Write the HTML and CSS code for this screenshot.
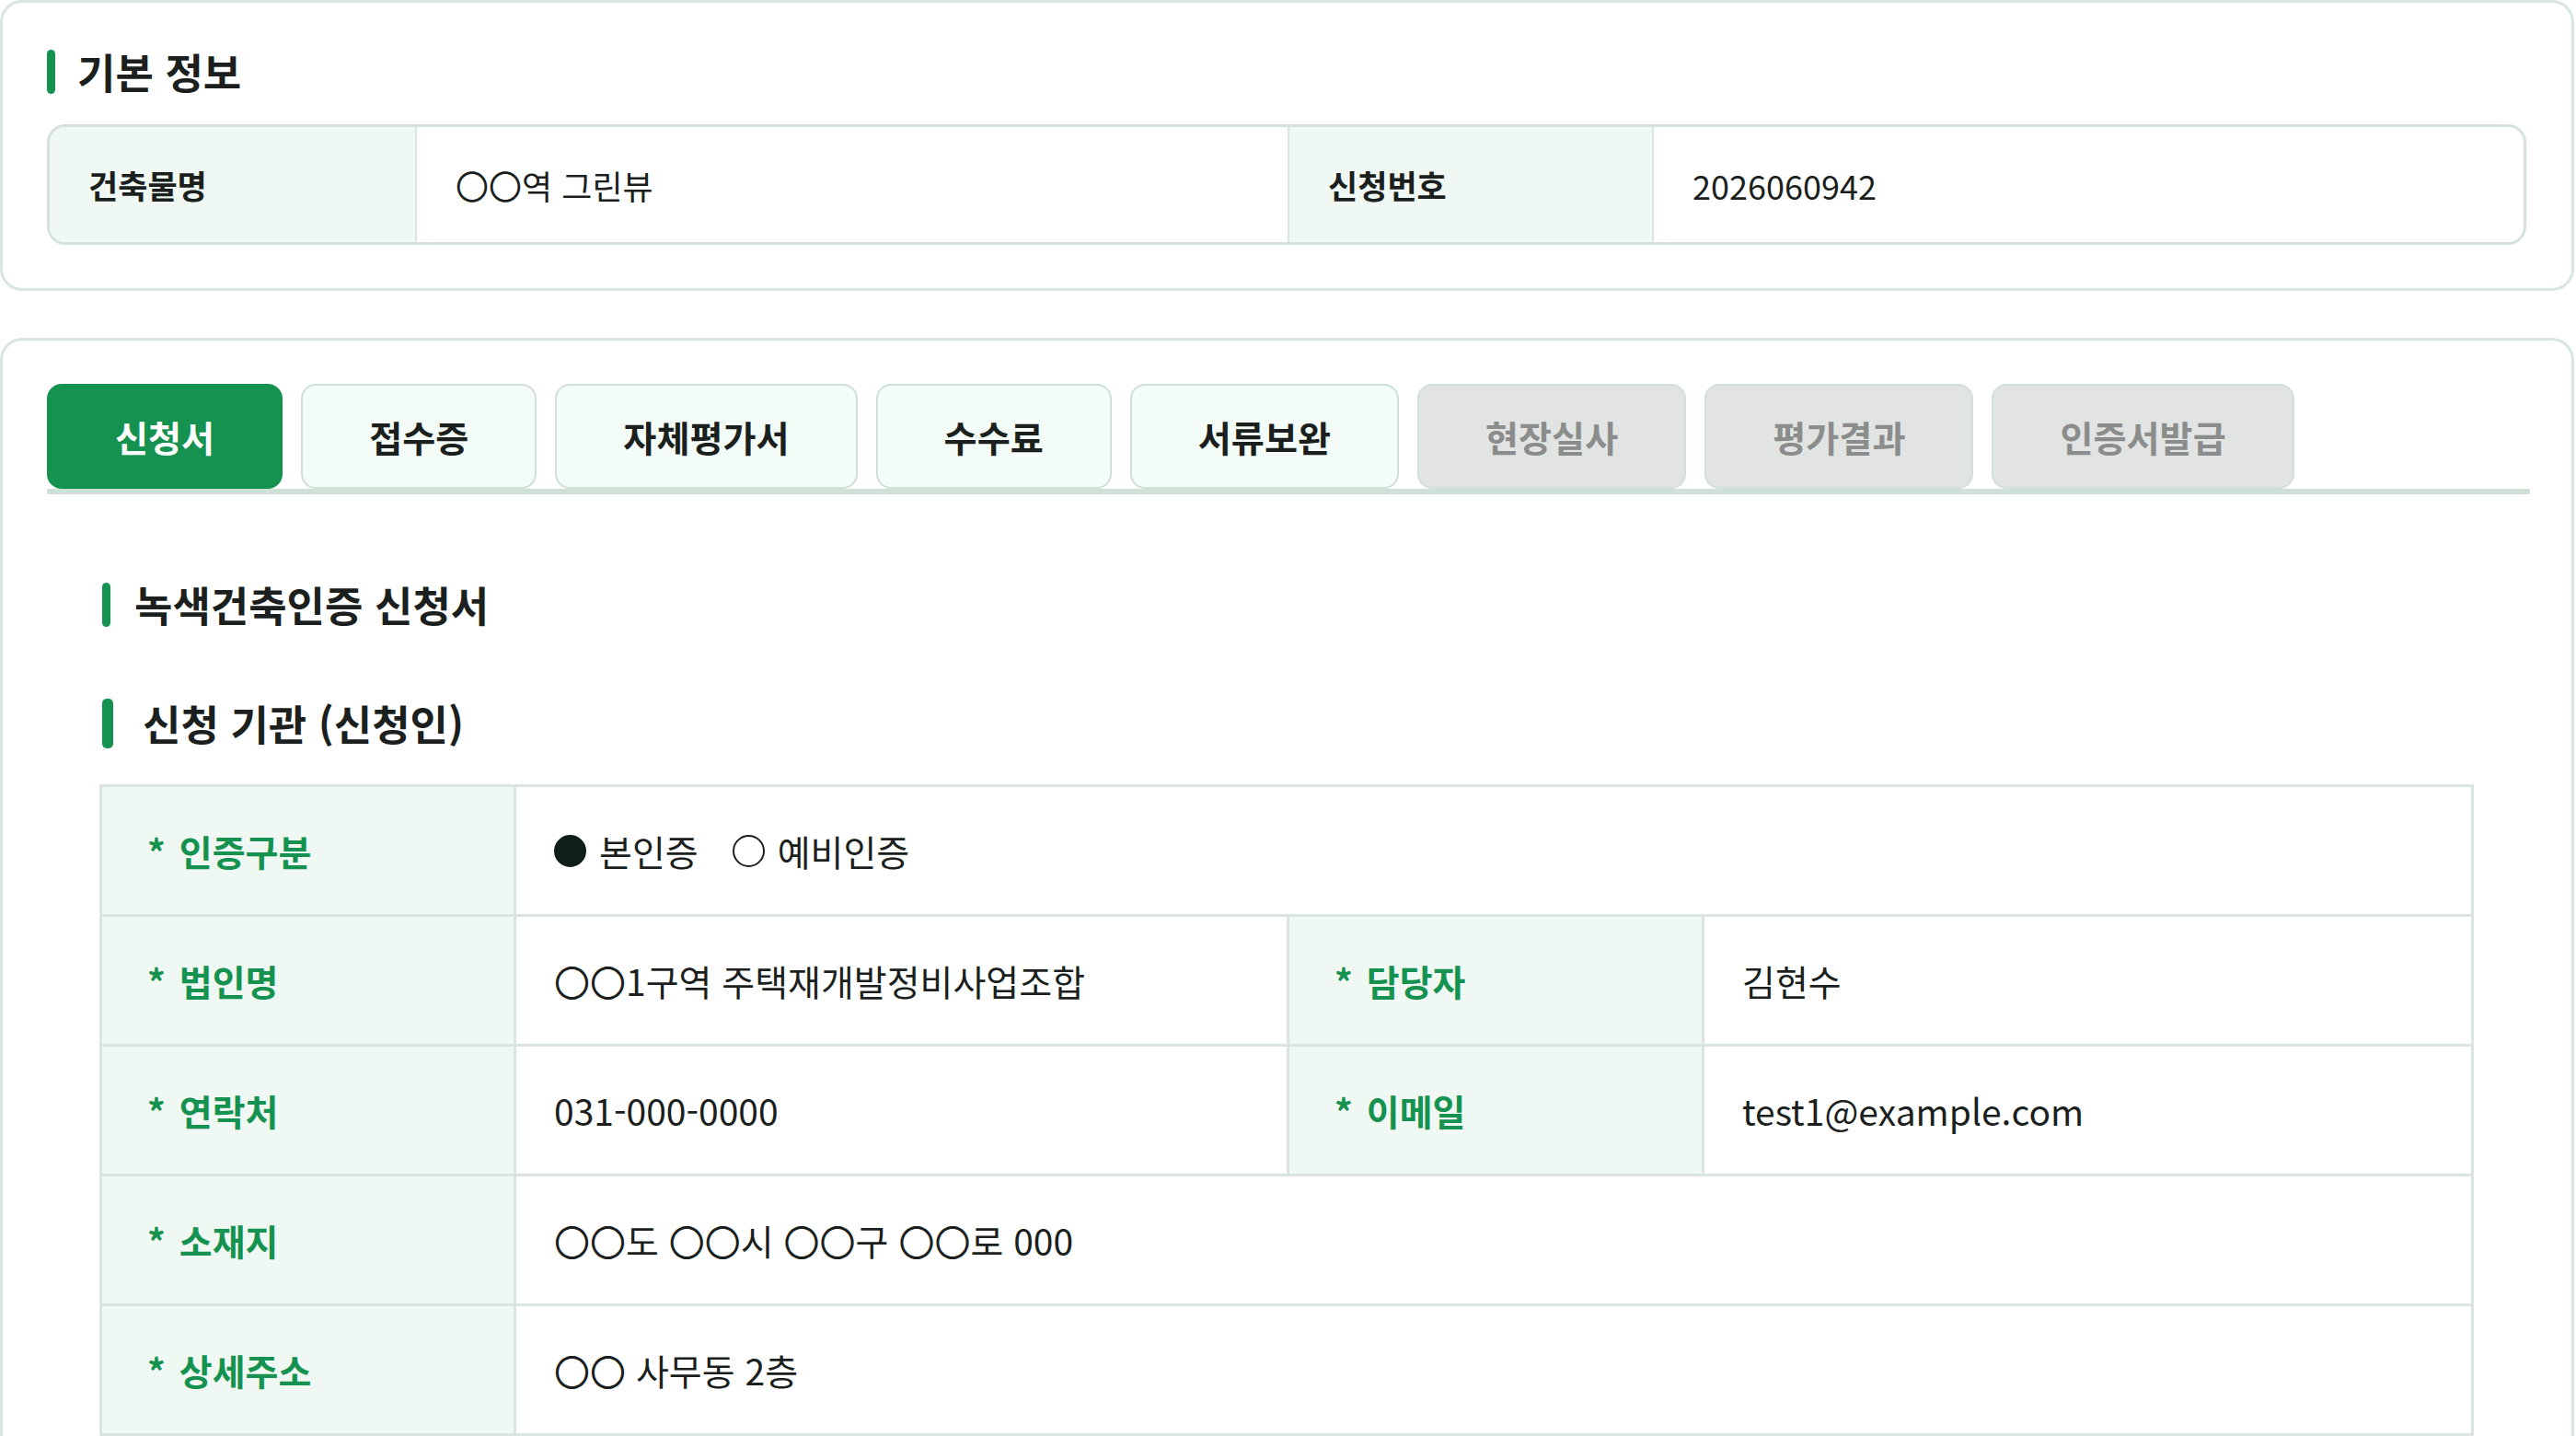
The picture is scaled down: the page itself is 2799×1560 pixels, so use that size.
FILE: index.html
```html
<!DOCTYPE html>
<html lang="ko">
<head>
<meta charset="utf-8">
<title>녹색건축인증 신청서</title>
<link rel="stylesheet" href="styles.css">
</head>
<body>
<div class="page">
  <section class="card card-basic">
    <h2 class="section-title">기본 정보</h2>
    <div class="info-grid">
      <div class="info-label">건축물명</div>
      <div class="info-value">〇〇역 그린뷰</div>
      <div class="info-label">신청번호</div>
      <div class="info-value">2026060942</div>
    </div>
  </section>

  <section class="card card-main">
    <nav class="tabs">
      <div class="tab active">신청서</div>
      <div class="tab">접수증</div>
      <div class="tab">자체평가서</div>
      <div class="tab">수수료</div>
      <div class="tab">서류보완</div>
      <div class="tab disabled">현장실사</div>
      <div class="tab disabled">평가결과</div>
      <div class="tab disabled">인증서발급</div>
    </nav>

    <div class="panel">
      <h2 class="section-title panel-title">녹색건축인증 신청서</h2>
      <h3 class="sub-title">신청 기관 (신청인)</h3>

      <div class="form-grid">
        <div class="f-label"><span class="req">*</span>인증구분</div>
        <div class="f-value span3">
          <span class="opt"><span class="radio on"></span>본인증</span>
          <span class="opt"><span class="radio"></span>예비인증</span>
        </div>

        <div class="f-label"><span class="req">*</span>법인명</div>
        <div class="f-value">〇〇1구역 주택재개발정비사업조합</div>
        <div class="f-label"><span class="req">*</span>담당자</div>
        <div class="f-value">김현수</div>

        <div class="f-label"><span class="req">*</span>연락처</div>
        <div class="f-value">031-000-0000</div>
        <div class="f-label"><span class="req">*</span>이메일</div>
        <div class="f-value">test1@example.com</div>

        <div class="f-label"><span class="req">*</span>소재지</div>
        <div class="f-value span3">〇〇도 〇〇시 〇〇구 〇〇로 000</div>

        <div class="f-label"><span class="req">*</span>상세주소</div>
        <div class="f-value span3">〇〇 사무동 2층</div>
      </div>
    </div>
  </section>
</div>
</body>
</html>
```

FILE: styles.css
```css
* { box-sizing: border-box; }

html, body {
  margin: 0;
  padding: 0;
  background: #ffffff;
}

body {
  font-family: "Noto Sans CJK KR", "Noto Sans", sans-serif;
  color: #1b1f1d;
}

.page {
  display: flex;
  flex-direction: column;
  gap: 51px;
  padding: 0 2px 0 0;
}

.card {
  border: 3px solid #d8e6df;
  border-radius: 24px;
  background: #ffffff;
}

.card-basic {
  padding: 51px 49px 47px 48px;
}

.section-title {
  display: flex;
  align-items: center;
  gap: 24px;
  margin: 0;
  height: 48px;
  font-size: 45px;
  font-weight: 700;
  line-height: 48px;
  color: #1b1f1d;
}

.section-title::before {
  content: "";
  flex: none;
  width: 9px;
  height: 48px;
  border-radius: 5px;
  background: #15924f;
}

/* basic info table */
.info-grid {
  margin-top: 33px;
  display: grid;
  grid-template-columns: 398fr 950fr 397fr 949fr;
  height: 131px;
  border: 3px solid #d3e3da;
  border-radius: 20px;
  overflow: hidden;
}

.info-label,
.info-value {
  display: flex;
  align-items: center;
  padding: 0 42px;
}

.info-label {
  background: #f0f8f4;
  font-size: 35px;
  font-weight: 700;
  color: #1b1f1d;
}

.info-value {
  background: #ffffff;
  font-size: 36px;
  font-weight: 400;
  color: #1b1f1d;
}

.info-grid > div + div {
  border-left: 2px solid #d8e6df;
}

/* tabs */
.card-main {
  padding: 47px 45px 50px 48px;
}

.tabs {
  display: flex;
  gap: 20px;
  border-bottom: 6px solid #cfe0d6;
}

.tab {
  display: flex;
  align-items: center;
  height: 114px;
  padding: 0 72px;
  border: 2px solid #cfe0d6;
  border-radius: 16px;
  background: #f3fcf7;
  font-size: 39.2px;
  font-weight: 700;
  color: #1b1f1d;
  white-space: nowrap;
}

.tab.active {
  background: #15924f;
  border-color: #15924f;
  color: #ffffff;
}

.tab.disabled {
  background: #e1e4e2;
  border-color: #d3e0d9;
  color: #8a8d8b;
}

/* panel */
.panel {
  padding: 96px 61px 0 57px;
}

.panel-title {
  margin-left: 3px;
  gap: 26px;
  font-size: 45px;
}

.sub-title {
  display: flex;
  align-items: center;
  gap: 32px;
  margin: 78px 0 0 3px;
  height: 54px;
  font-size: 45px;
  font-weight: 700;
  line-height: 54px;
  color: #1b1f1d;
}

.sub-title::before {
  content: "";
  flex: none;
  width: 12px;
  height: 54px;
  border-radius: 5px;
  background: #15924f;
}

/* form table */
.form-grid {
  margin-top: 39px;
  display: grid;
  grid-template-columns: 447px 837px 448px 1fr;
  grid-auto-rows: 138px;
  gap: 3px;
  border: 3px solid #dae5e0;
  background: #dae5e0;
}

.f-label,
.f-value {
  display: flex;
  align-items: center;
  font-size: 39px;
}

.f-label {
  padding-left: 49px;
  background: #f0f8f4;
  font-weight: 700;
  color: #15924f;
}

.req {
  margin-right: 15px;
}

.f-value {
  padding-left: 41px;
  background: #ffffff;
  font-weight: 400;
  color: #1b1f1d;
  gap: 37px;
}

.span3 {
  grid-column: span 3;
}

.opt {
  display: flex;
  align-items: center;
  gap: 14px;
}

.radio {
  display: inline-block;
  width: 35px;
  height: 35px;
  border-radius: 50%;
  border: 2px solid #1b1f1d;
  background: #ffffff;
}

.radio.on {
  background: #0f1f17;
  border-color: #0f1f17;
}
```
